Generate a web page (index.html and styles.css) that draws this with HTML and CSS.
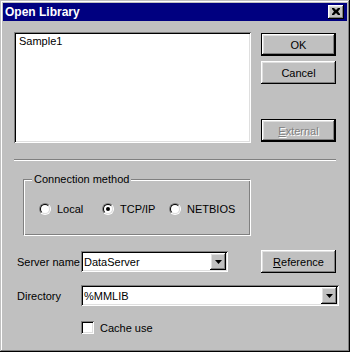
FILE: index.html
```html
<!DOCTYPE html>
<html>
<head>
<meta charset="utf-8">
<link rel="stylesheet" href="styles.css">
</head>
<body>
<div class="window">
  <div class="titlebar">
    <span class="title">Open Library</span>
    <div class="close raised">
      <svg width="8" height="7" viewBox="0 0 8 7"><path d="M0 0h2l2 2 2-2h2v1l-2 2.5 2 2.5v1h-2l-2-2-2 2h-2v-1l2-2.5-2-2.5z" fill="#000"/></svg>
    </div>
  </div>
  <div class="client">
    <div class="top">
      <div class="listbox sunken"><div class="item">Sample1</div></div>
      <div class="btncol">
        <div class="btn default ok">OK</div>
        <div class="btn cancel">Cancel</div>
        <div class="btn default disabled external"><span><u>E</u>xternal</span></div>
      </div>
    </div>
    <div class="separator"></div>
    <div class="group">
      <span class="legend">Connection method</span>
      <div class="radios">
        <div class="opt opt-local"><span class="radio"></span><span>Local</span></div>
        <div class="opt opt-tcp"><span class="radio checked"></span><span>TCP/IP</span></div>
        <div class="opt"><span class="radio"></span><span>NETBIOS</span></div>
      </div>
    </div>
    <div class="row server-row">
      <span class="label">Server name</span>
      <div class="combo sunken server-combo">
        <span class="combo-text">DataServer</span>
        <div class="drop raised"><svg width="7" height="4" viewBox="0 0 7 4"><path d="M0 0h7l-3.5 4z" fill="#000"/></svg></div>
      </div>
      <div class="btn reference"><span><u>R</u>eference</span></div>
    </div>
    <div class="row dir-row">
      <span class="label">Directory</span>
      <div class="combo sunken dir-combo">
        <span class="combo-text">%MMLIB</span>
        <div class="drop raised"><svg width="7" height="4" viewBox="0 0 7 4"><path d="M0 0h7l-3.5 4z" fill="#000"/></svg></div>
      </div>
    </div>
    <div class="check-row">
      <span class="checkbox sunken"></span>
      <span>Cache use</span>
    </div>
  </div>
</div>
</body>
</html>
```
FILE: styles.css
```css
* { box-sizing: border-box; margin: 0; padding: 0; }
html, body { margin: 0; background: #c0c0c0; }
body {
  font-family: "Liberation Sans", Arial, sans-serif;
  font-size: 11px;
  color: #000;
}
.window {
  width: 350px;
  height: 352px;
  background: #c0c0c0;
  padding: 3px;
  display: flex;
  flex-direction: column;
  box-shadow: inset -1px -1px #000, inset 1px 1px #c0c0c0, inset -2px -2px #808080, inset 2px 2px #fff;
}
.titlebar {
  height: 18px;
  background: #000080;
  color: #fff;
  display: flex;
  align-items: center;
  justify-content: space-between;
  padding: 0 3px 0 2px;
}
.title { font-weight: bold; font-size: 12px; }
.raised {
  background: #c0c0c0;
  box-shadow: inset -1px -1px #000, inset 1px 1px #fff, inset -2px -2px #808080, inset 2px 2px #dfdfdf;
}
.sunken {
  background: #fff;
  box-shadow: inset 1px 1px #808080, inset -1px -1px #fff, inset 2px 2px #000, inset -2px -2px #dfdfdf;
}
.close {
  width: 16px;
  height: 14px;
  display: flex;
  align-items: center;
  justify-content: center;
  padding-right: 1px;
  padding-bottom: 1px;
}
.close svg { display: block; }
.client {
  flex: 1;
  padding: 11px 0 0 11px;
  display: flex;
  flex-direction: column;
}
.top { display: flex; height: 111px; }
.listbox { width: 237px; height: 111px; padding: 3px 5px; }
.item { line-height: 13px; }
.btncol { margin-left: 10px; width: 75px; display: flex; flex-direction: column; }
.btn {
  width: 75px;
  height: 23px;
  display: flex;
  align-items: center;
  justify-content: center;
  background: #c0c0c0;
  box-shadow: inset -1px -1px #000, inset 1px 1px #fff, inset -2px -2px #808080, inset 2px 2px #dfdfdf;
}
.btn.default {
  border: 1px solid #000;
  box-shadow: inset -1px -1px #000, inset 1px 1px #fff, inset -2px -2px #808080, inset 2px 2px #dfdfdf;
}
.ok { margin-top: 1px; }
.cancel { margin-top: 5px; }
.external { margin-top: auto; margin-bottom: 1px; }
.disabled span { color: #808080; text-shadow: 1px 1px 0 #fff; }
.separator {
  margin-top: 16px;
  width: 322px;
  height: 2px;
  border-top: 1px solid #808080;
  border-bottom: 1px solid #fff;
}
.group {
  position: relative;
  margin-top: 18px;
  margin-left: 9px;
  width: 228px;
  height: 57px;
  border: 1px solid #808080;
  border-right-color: #fff;
  border-bottom-color: #fff;
  box-shadow: inset 1px 1px #fff, inset -1px -1px #808080;
}
.legend {
  position: absolute;
  top: -7px;
  left: 8px;
  padding: 0 2px;
  background: #c0c0c0;
  line-height: 13px;
}
.radios { display: flex; padding: 23px 0 0 15px; }
.opt { display: flex; align-items: center; }
.opt-local { width: 63px; }
.opt-tcp { width: 67px; }
.radio {
  position: relative;
  width: 12px;
  height: 12px;
  margin-right: 6px;
  border-radius: 50%;
  border: 1px solid;
  border-color: #808080 #fff #fff #808080;
}
.radio::before {
  content: "";
  position: absolute;
  inset: 0;
  border-radius: 50%;
  border: 1px solid;
  border-color: #000 #dfdfdf #dfdfdf #000;
  background: #fff;
}
.radio.checked::after {
  content: "";
  position: absolute;
  left: 3px;
  top: 3px;
  width: 4px;
  height: 4px;
  border-radius: 50%;
  background: #000;
}
.row { display: flex; align-items: center; }
.server-row { margin-top: 14px; height: 23px; }
.dir-row { margin-top: 12px; height: 21px; }
.label { width: 67px; padding-left: 3px; }
.combo {
  height: 21px;
  display: flex;
  align-items: center;
  justify-content: space-between;
  padding: 2px;
}
.combo-text { padding-left: 1px; }
.server-combo { width: 147px; }
.dir-combo { width: 258px; }
.drop {
  width: 16px;
  height: 17px;
  display: flex;
  align-items: center;
  justify-content: center;
  padding-left: 1px;
}
.drop svg { display: block; }
.reference { margin-left: 33px; }
.check-row {
  margin-top: 15px;
  margin-left: 67px;
  display: flex;
  align-items: center;
}
.checkbox { width: 13px; height: 13px; margin-right: 6px; }
```
